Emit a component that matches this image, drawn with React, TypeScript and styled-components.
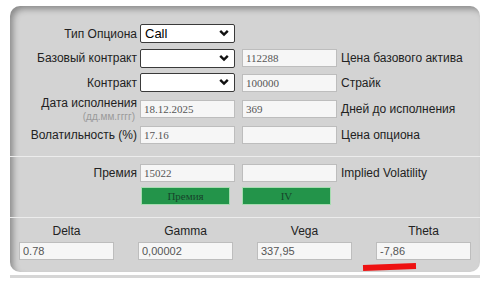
import styled, { createGlobalStyle } from 'styled-components';

const GlobalStyle = createGlobalStyle`
  body {
    margin: 0;
    background: #ffffff;
    font-family: 'Liberation Sans', Arial, sans-serif;
  }
`;

type Greek = { name: string; value: string };

const GREEKS: Greek[] = [
  { name: 'Delta', value: '0.78' },
  { name: 'Gamma', value: '0,00002' },
  { name: 'Vega', value: '337,95' },
  { name: 'Theta', value: '-7,86' },
];

const Chevron = () => (
  <svg width="10" height="8" viewBox="0 0 10 8">
    <path d="M1.2 1.8 L5 5.6 L8.8 1.8" fill="none" stroke="#111" strokeWidth="2.4" />
  </svg>
);

const SelectBox = ({ value }: { value?: string }) => (
  <SelectWrap>
    <SelectField defaultValue={value ?? ''}>
      {value ? <option>{value}</option> : <option value="" />}
    </SelectField>
    <ChevronSlot>
      <Chevron />
    </ChevronSlot>
  </SelectWrap>
);

const App = () => {
  return (
    <Page>
      <GlobalStyle />
      <Panel>
        <TopGrid>
          <Label>Тип Опциона</Label>
          <SelectBox value="Call" />
          <span />
          <span />

          <Label>Базовый контракт</Label>
          <SelectBox />
          <RightCell>
            <Field $serif readOnly value="112288" />
          </RightCell>
          <SideLabel>Цена базового актива</SideLabel>

          <Label>Контракт</Label>
          <SelectBox />
          <RightCell>
            <Field $serif readOnly value="100000" />
          </RightCell>
          <SideLabel>Страйк</SideLabel>

          <Label>
            <LabelStack>
              Дата исполнения
              <Hint>(дд.мм.гггг)</Hint>
            </LabelStack>
          </Label>
          <Field $serif readOnly value="18.12.2025" />
          <RightCell>
            <Field $serif readOnly value="369" />
          </RightCell>
          <SideLabel>Дней до исполнения</SideLabel>

          <Label>Волатильность (%)</Label>
          <Field $serif readOnly value="17.16" />
          <RightCell>
            <Field $serif readOnly value="" />
          </RightCell>
          <SideLabel>Цена опциона</SideLabel>
        </TopGrid>

        <PremiumGrid>
          <Label>Премия</Label>
          <Field $serif readOnly value="15022" />
          <RightCell>
            <Field $serif readOnly value="" />
          </RightCell>
          <SideLabel>Implied Volatility</SideLabel>

          <span />
          <ActionButton>Премия</ActionButton>
          <RightCell>
            <ActionButton>IV</ActionButton>
          </RightCell>
          <span />
        </PremiumGrid>

        <GreeksRow>
          {GREEKS.map((g) => (
            <GreekCell key={g.name}>
              <GreekName>{g.name}</GreekName>
              <Field readOnly value={g.value} />
            </GreekCell>
          ))}
        </GreeksRow>
        <RedMark />
      </Panel>
      <BottomStrip />
    </Page>
  );
};

const Page = styled.div`
  padding: 6px 0 0 10px;
`;

const Panel = styled.div`
  position: relative;
  width: 470px;
  background: #d3d3d3;
  border-radius: 10px;
  box-shadow: inset 4px 4px 6px -1px rgba(0, 0, 0, 0.35);
`;

const TopGrid = styled.div`
  display: grid;
  grid-template-columns: 130px 95px 102px 1fr;
  grid-template-rows: 25px 24px 25px 27px 25px;
  align-items: center;
  padding: 15px 0 9px;
`;

const PremiumGrid = styled.div`
  display: grid;
  grid-template-columns: 130px 95px 102px 1fr;
  grid-template-rows: 22px 24px;
  align-items: center;
  border-top: 1px solid #ececec;
  padding: 5px 0 9px;
`;

const Label = styled.div`
  font-size: 12px;
  color: #222;
  text-align: right;
  padding-right: 3px;
  white-space: nowrap;
`;

const LabelStack = styled.div`
  display: flex;
  flex-direction: column;
  align-items: flex-end;
  line-height: 13px;
  margin-top: 2px;
`;

const Hint = styled.span`
  font-size: 10px;
  color: #9a9a9a;
  margin-right: 2px;
`;

const SideLabel = styled.div`
  font-size: 12px;
  color: #222;
  padding-left: 4px;
  white-space: nowrap;
`;

const RightCell = styled.div`
  display: flex;
  justify-content: flex-end;
`;

const Field = styled.input<{ $serif?: boolean }>`
  box-sizing: border-box;
  width: 95px;
  height: 18px;
  margin: 0;
  padding: 0 3px;
  border: 1px solid #bdbdbd;
  background: #f6f6f6;
  color: #555;
  font-family: ${({ $serif }) =>
    $serif ? "'Liberation Serif', 'Times New Roman', serif" : "'Liberation Sans', Arial, sans-serif"};
  font-size: 11px;
  outline: none;
`;

const SelectWrap = styled.div`
  position: relative;
  width: 95px;
  height: 19px;
`;

const SelectField = styled.select`
  appearance: none;
  box-sizing: border-box;
  width: 100%;
  height: 100%;
  margin: 0;
  padding: 0 4px;
  border: 1px solid #3a3a3a;
  border-radius: 2px;
  background: #ffffff;
  color: #000;
  font-family: 'Liberation Sans', Arial, sans-serif;
  font-size: 13px;
`;

const ChevronSlot = styled.span`
  position: absolute;
  right: 6px;
  top: 5px;
  display: flex;
  pointer-events: none;
`;

const ActionButton = styled.div`
  box-sizing: border-box;
  width: 89px;
  height: 18px;
  display: flex;
  align-items: center;
  justify-content: center;
  margin-left: 1px;
  background: #23944a;
  border: 1px solid #a6dcb0;
  color: #17442a;
  font-family: 'Liberation Serif', 'Times New Roman', serif;
  font-size: 11px;
  ${RightCell} & {
    margin-left: 0;
    margin-right: 6px;
  }
`;

const GreeksRow = styled.div`
  display: grid;
  grid-template-columns: repeat(4, 95px);
  justify-content: space-between;
  border-top: 1px solid #ececec;
  padding: 6px 9px 12px;
`;

const GreekCell = styled.div`
  display: flex;
  flex-direction: column;
  align-items: center;
  gap: 4px;
`;

const GreekName = styled.div`
  font-size: 12px;
  line-height: 14px;
  color: #222;
`;

const RedMark = styled.div`
  position: absolute;
  left: 353px;
  top: 258px;
  width: 53px;
  height: 6px;
  background: #ee1111;
  transform: rotate(-2deg);
`;

const BottomStrip = styled.div`
  width: 470px;
  height: 3px;
  margin-top: 3px;
  background: #d6d6d6;
`;

export default App;
